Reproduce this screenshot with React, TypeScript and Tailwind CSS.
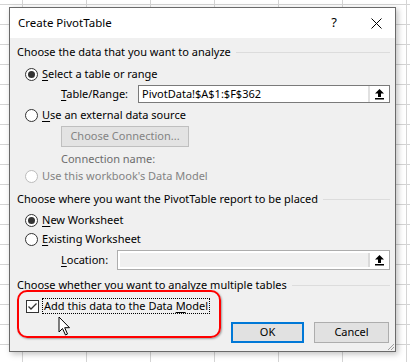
import React from 'react';

// Create PivotTable dialog over an Excel sheet

function Radio({ checked = false, disabled = false }: { checked?: boolean; disabled?: boolean }) {
  return (
    <span
      className={`flex h-[13px] w-[13px] shrink-0 items-center justify-center rounded-full border bg-white ${
        disabled ? 'border-[#bcbcbc]' : 'border-[#333333]'
      }`}
    >
      {checked && <span className="h-[7px] w-[7px] rounded-full bg-[#333333]" />}
    </span>
  );
}

function Section({ title }: { title: string }) {
  return (
    <div className="flex h-[16px] items-center gap-[5px]">
      <span className="whitespace-nowrap">{title}</span>
      <span className="h-px flex-1 bg-[#dcdcdc]" />
    </div>
  );
}

function PickButton({ disabled = false }: { disabled?: boolean }) {
  return (
    <span
      className={`flex h-full w-[21px] shrink-0 items-center justify-center border-l-2 ${
        disabled ? 'border-[#dadada] bg-white' : 'border-[#e1e1e1] bg-white'
      }`}
    >
      <svg width="11" height="12" viewBox="0 0 11 12">
        <path d="M5.5 1 L10 5.5 L7 5.5 L7 9 L4 9 L4 5.5 L1 5.5 Z" fill="#000" />
        <rect x="1" y="10" width="9" height="1.5" fill="#000" />
      </svg>
    </span>
  );
}

const U = ({ children }: { children: React.ReactNode }) => <span className="underline underline-offset-2">{children}</span>;

export default function App() {
  return (
    <div
      className="relative h-[362px] w-[410px] overflow-hidden bg-white bg-[linear-gradient(to_right,#d4d4d4_1px,transparent_1px),linear-gradient(to_bottom,#d4d4d4_1px,transparent_1px)] bg-size-[64px_20px] bg-position-[22px_4px] pt-[7px] pl-[9px] text-[11px] text-black"
      style={{ fontFamily: '"Noto Sans", "Open Sans", sans-serif' }}
    >
      <div className="relative flex h-[345px] w-[387px] flex-col border border-[#6a6a6a] bg-[#f0f0f0] shadow-[2px_2px_6px_rgba(0,0,0,0.25)]">
        {/* Title bar */}
        <div className="flex h-[30px] items-center bg-white pl-[8px]">
          <span className="flex-1 text-[11.5px]">Create PivotTable</span>
          <span className="mr-[34px] text-[13px]">?</span>
          <svg className="mr-[13px]" width="11" height="11" viewBox="0 0 11 11">
            <path d="M0.5 0.5 L10.5 10.5 M10.5 0.5 L0.5 10.5" stroke="#000" strokeWidth="1" />
          </svg>
        </div>

        {/* Body */}
        <div className="relative flex flex-1 flex-col pl-[7px] pr-[5px]">
          <div className="mt-[6px]">
            <Section title="Choose the data that you want to analyze" />
          </div>

          <div className="mt-[6px] flex h-[16px] items-center gap-[4px] pl-[8px]">
            <Radio checked />
            <span>
              <U>S</U>elect a table or range
            </span>
          </div>

          <div className="mt-[3px] flex h-[18px] items-center pl-[44px]">
            <span className="w-[77px]">
              <U>T</U>able/Range:
            </span>
            <div className="flex h-full flex-1 items-center border border-[#7a7a7a] bg-white">
              <span className="flex-1 pl-[3px]">PivotData!$A$1:$F$362</span>
              <PickButton />
            </div>
          </div>

          <div className="mt-[4px] flex h-[16px] items-center gap-[4px] pl-[8px]">
            <Radio />
            <span>
              <U>U</U>se an external data source
            </span>
          </div>

          <div className="mt-[3px] pl-[44px]">
            <div className="flex h-[21px] w-[128px] items-center justify-center border border-[#bfbfbf] bg-[#e3e3e3] text-[#838383]">
              Choose Connection...
            </div>
          </div>

          <div className="mt-[4px] flex h-[16px] items-center pl-[44px] text-[#6d6d6d]">Connection name:</div>

          <div className="mt-[1px] flex h-[16px] items-center gap-[4px] pl-[8px] text-[#838383]">
            <Radio disabled />
            <span>Use this workbook's Data Model</span>
          </div>

          <div className="mt-[7px]">
            <Section title="Choose where you want the PivotTable report to be placed" />
          </div>

          <div className="mt-[5px] flex h-[16px] items-center gap-[4px] pl-[8px]">
            <Radio checked />
            <span>
              <U>N</U>ew Worksheet
            </span>
          </div>

          <div className="mt-[3px] flex h-[16px] items-center gap-[4px] pl-[8px]">
            <Radio />
            <span>
              <U>E</U>xisting Worksheet
            </span>
          </div>

          <div className="mt-[3px] flex h-[20px] items-center pl-[44px]">
            <span className="w-[56px]">
              <U>L</U>ocation:
            </span>
            <div className="flex h-full flex-1 items-center border border-[#adadad] bg-white p-[2px] pr-0">
              <span className="h-full flex-1 bg-[#f0f0f0]" />
              <PickButton disabled />
            </div>
          </div>

          <div className="mt-[7px]">
            <Section title="Choose whether you want to analyze multiple tables" />
          </div>

          <div className="mt-[5px] flex h-[16px] items-center gap-[3px] pl-[9px]">
            <span className="flex h-[13px] w-[13px] items-center justify-center border border-[#333333] bg-white">
              <svg width="11" height="11" viewBox="0 0 11 11">
                <path d="M1.5 5.5 L4 8 L9.5 2.5" fill="none" stroke="#333" strokeWidth="1.3" />
              </svg>
            </span>
            <span className="border border-dotted border-black px-[1px] leading-[14px]">
              Add this data to the Data <U>M</U>odel
            </span>
          </div>

          <div className="mt-[8px] flex justify-end gap-[10px] pr-[1px]">
            <button className="h-[21px] w-[73px] border-2 border-[#0078d7] bg-[#e1e1e1]">OK</button>
            <button className="h-[21px] w-[75px] border border-[#adadad] bg-[#e1e1e1]">Cancel</button>
          </div>

          {/* Annotation highlight */}
          <div className="pointer-events-none absolute top-[252px] left-[7px] h-[48px] w-[204px] rounded-[10px] border-2 border-[#ff0000] shadow-[1px_1px_2px_rgba(0,0,0,0.35)]" />

          {/* Mouse cursor */}
          <svg className="absolute top-[278px] left-[48px]" width="14" height="20" viewBox="0 0 14 20">
            <path
              d="M1 1 L1 16 L4.5 12.5 L7.5 19 L9.5 18 L6.7 11.7 L11.5 11.7 Z"
              fill="#fff"
              stroke="#000"
              strokeWidth="1"
              strokeLinejoin="round"
            />
          </svg>

          {/* Resize grip */}
          <svg className="absolute right-0 bottom-0" width="9" height="9" viewBox="0 0 9 9">
            <path d="M8 2 L2 8 M8 5 L5 8 M8 8 L8 8" stroke="#a0a0a0" strokeWidth="1" />
          </svg>
        </div>
      </div>
    </div>
  );
}
